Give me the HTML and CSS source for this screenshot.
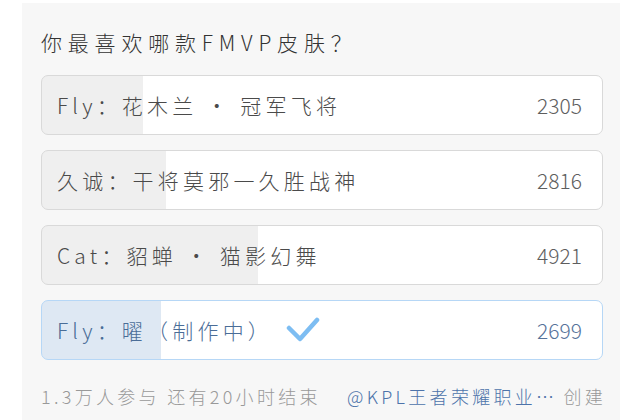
FILE: index.html
```html
<!DOCTYPE html>
<html>
<head>
  <meta charset="utf-8">
  <title>投票</title>
  <link rel="stylesheet" href="styles.css">
</head>
<body>
  <!-- Vote card -->
  <div class="vote-card">
    <div class="vote-title">你最喜欢哪款FMVP皮肤？</div>

    <div class="options">
      <div class="option" style="--pct: 18.1%">
        <span class="label">Fly：花木兰 · 冠军飞将</span>
        <span class="count">2305</span>
      </div>
      <div class="option" style="--pct: 22.1%">
        <span class="label">久诚：干将莫邪一久胜战神</span>
        <span class="count">2816</span>
      </div>
      <div class="option" style="--pct: 38.6%">
        <span class="label">Cat：貂蝉 · 猫影幻舞</span>
        <span class="count">4921</span>
      </div>
      <div class="option selected" style="--pct: 21.2%">
        <span class="label">Fly：曜（制作中）</span>
        <svg class="check" width="34" height="26" viewBox="0 0 34 26">
          <polyline points="3,11 14,22 31,3" fill="none" stroke="#7dbdf2" stroke-width="4.5" stroke-linecap="round" stroke-linejoin="round"/>
        </svg>
        <span class="count">2699</span>
      </div>
    </div>

    <div class="vote-footer">
      <span class="meta">1.3万人参与&nbsp;还有20小时结束</span>
      <span class="creator"><span class="author">@KPL王者荣耀职业…</span>创建</span>
    </div>
  </div>
</body>
</html>
```

FILE: styles.css
```css
/* Base */
body, html {
  margin: 0;
  padding: 0;
  background: #fff;
  font-family: "Noto Sans CJK SC", "Noto Sans", sans-serif;
  font-weight: 300;
  overflow: hidden;
}

/* Card */
.vote-card {
  width: 598px;
  margin: 3px 0 0 22px;
  padding: 25px 17px 20px 19px;
  box-sizing: border-box;
  background: #f7f7f7;
  height: 430px;
}

.vote-title {
  color: #333;
  font-size: 21px;
  line-height: 28px;
  letter-spacing: 5.8px;
  margin-bottom: 19px;
}

/* Options */
.options {
  display: flex;
  flex-direction: column;
  gap: 15px;
}

.option {
  height: 60px;
  box-sizing: border-box;
  display: flex;
  align-items: center;
  padding: 0 20px 0 15px;
  border: 1px solid #d9d9d9;
  border-radius: 7px;
  background: linear-gradient(to right, #efefef var(--pct), #fff var(--pct));
  color: #4a4a4a;
}

.label {
  font-size: 21px;
  letter-spacing: 4.2px;
  flex: 0 0 auto;
}

.count {
  margin-left: auto;
  font-size: 21px;
  color: #5e5e5e;
}

.option.selected {
  border-color: #b6d7f6;
  background: linear-gradient(to right, #dee8f3 var(--pct), #fff var(--pct));
  color: #4a6d97;
}

.option.selected .count {
  color: #56729a;
}

.check {
  margin-left: 13px;
  display: block;
}

/* Footer */
.vote-footer {
  display: flex;
  justify-content: space-between;
  margin-top: 24px;
  font-size: 18px;
  line-height: 24px;
  letter-spacing: 3.3px;
  color: #999;
}

.author {
  color: #4d73aa;
  margin-right: 6px;
}

.creator {
  margin-right: -3px;
}
```
